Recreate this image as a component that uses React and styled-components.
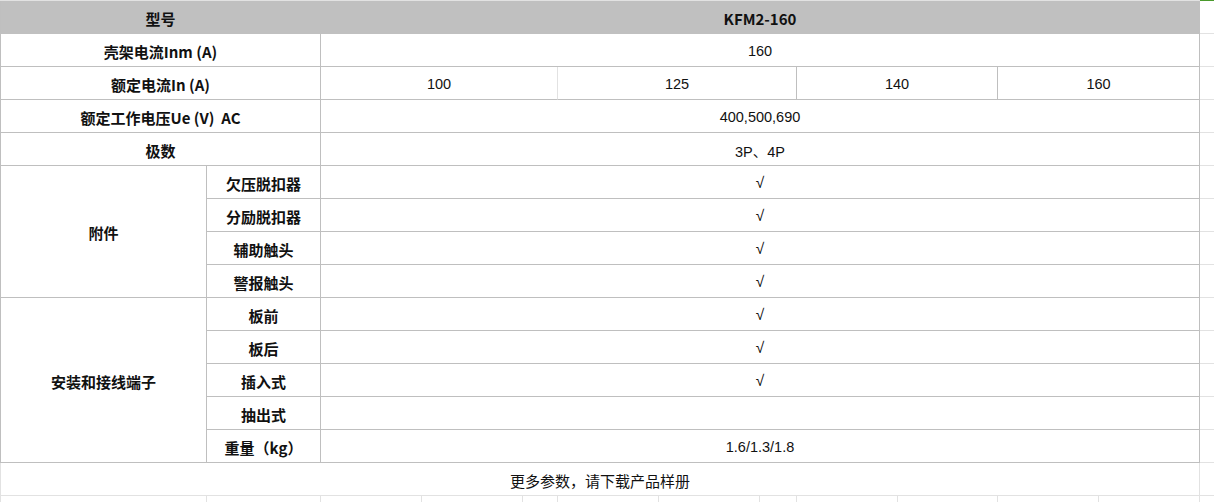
import React from 'react';
import styled, { createGlobalStyle } from 'styled-components';

const GlobalStyle = createGlobalStyle`
  html, body {
    margin: 0;
    padding: 0;
    background: #fff;
  }
  body {
    font-family: "Liberation Sans", "Noto Sans CJK SC", sans-serif;
    color: #000;
  }
`;

const DARK = '#bfbfbf';
const LIGHT = '#e2e2e2';

const Sheet = styled.div`
  display: flex;
  width: 1214px;
  height: 502px;
  overflow: hidden;
`;

const Table = styled.div`
  display: grid;
  grid-template-columns: 207px 114px 237px 239px 201px 202px;
  grid-auto-rows: 33px;
  width: 1200px;
  border-top: 1px solid ${LIGHT};
  align-content: start;
`;

const Cell = styled.div`
  grid-column: ${p => p.col || 'auto'};
  grid-row: ${p => p.row || 'auto'};
  display: flex;
  align-items: center;
  justify-content: center;
  box-sizing: border-box;
  padding-top: 2px;
  background: ${p => (p.head ? '#c0c0c0' : '#fff')};
  border-right: 1px solid ${p => (p.head ? '#c0c0c0' : p.lightRight ? LIGHT : DARK)};
  border-bottom: 1px solid ${p => (p.head ? '#c0c0c0' : p.lightBottom ? LIGHT : DARK)};
  border-left: ${p => (p.first ? `1px solid ${p.lightLeft ? LIGHT : DARK}` : 'none')};
  font-family: ${p => (p.label || p.cjk ? '"Noto Sans CJK SC", "Liberation Sans", sans-serif' : '"Liberation Sans", "Noto Sans CJK SC", sans-serif')};
  font-weight: ${p => (p.label ? 700 : 400)};
  font-size: ${p => (p.label || p.cjk ? '15px' : '14.5px')};
  color: #111;
  white-space: pre;
`;

const Check = styled.span`
  font-family: "Liberation Sans", sans-serif;
  font-size: 15.5px;
  color: #111;
`;

const Ghost = styled.div`
  grid-column: 1 / 7;
  display: grid;
  grid-template-columns: 207px 114px 101px 101px 35px 101px 101px 37px 101px 100px 101px 101px;
`;

const GhostCell = styled.div`
  box-sizing: border-box;
  height: 33px;
  border-right: 1px solid ${LIGHT};
  border-left: ${p => (p.first ? `1px solid ${LIGHT}` : 'none')};
`;

const Filler = styled.div`
  display: flex;
  flex-direction: column;
  flex: 1;
  border-top: 1px solid #4a9a2c;
`;

const FillerRow = styled.div`
  height: 33px;
  flex-shrink: 0;
  box-sizing: border-box;
  border-bottom: 1px solid ${LIGHT};
`;

const accessories = ['欠压脱扣器', '分励脱扣器', '辅助触头', '警报触头'];
const mounting = [
  { name: '板前', check: true },
  { name: '板后', check: true },
  { name: '插入式', check: true },
  { name: '抽出式', value: '' },
  { name: '重量（kg）', value: '1.6/1.3/1.8' },
];
const ghostCols = 12;

export default function App() {
  return (
    <>
      <GlobalStyle />
      <Sheet>
        <Table>
          <Cell head label first col="1 / 3">型号</Cell>
          <Cell head label col="3 / 7">KFM2-160</Cell>

          <Cell label first col="1 / 3">壳架电流Inm (A)</Cell>
          <Cell col="3 / 7">160</Cell>

          <Cell label first col="1 / 3">额定电流In (A)</Cell>
          <Cell lightRight>100</Cell>
          <Cell>125</Cell>
          <Cell>140</Cell>
          <Cell>160</Cell>

          <Cell label first col="1 / 3">额定工作电压Ue (V)  AC</Cell>
          <Cell col="3 / 7">400,500,690</Cell>

          <Cell label first col="1 / 3">极数</Cell>
          <Cell col="3 / 7">3P、4P</Cell>

          <Cell label first col="1" row="6 / 10">附件</Cell>
          {accessories.map((name, i) => (
            <React.Fragment key={name}>
              <Cell label col="2" row={`${6 + i}`}>{name}</Cell>
              <Cell col="3 / 7" row={`${6 + i}`}><Check>√</Check></Cell>
            </React.Fragment>
          ))}

          <Cell label first col="1" row="10 / 15">安装和接线端子</Cell>
          {mounting.map((m, i) => (
            <React.Fragment key={m.name}>
              <Cell label col="2" row={`${10 + i}`}>{m.name}</Cell>
              <Cell col="3 / 7" row={`${10 + i}`}>
                {m.check ? <Check>√</Check> : m.value}
              </Cell>
            </React.Fragment>
          ))}

          <Cell cjk first lightLeft lightRight lightBottom col="1 / 7">更多参数，请下载产品样册</Cell>

          <Ghost>
            {Array.from({ length: ghostCols }).map((_, i) => (
              <GhostCell key={i} first={i === 0} />
            ))}
          </Ghost>
        </Table>
        <Filler>
          {Array.from({ length: 16 }).map((_, i) => (
            <FillerRow key={i} />
          ))}
        </Filler>
      </Sheet>
    </>
  );
}
